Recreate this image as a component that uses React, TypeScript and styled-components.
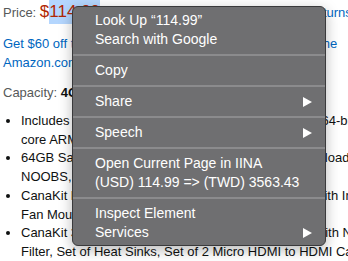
import React from "react";
import styled, { createGlobalStyle } from "styled-components";

const Global = createGlobalStyle`
  html, body {
    margin: 0;
    background: #fff;
    overflow: hidden;
  }
  body {
    font-family: "Liberation Sans", Arial, sans-serif;
  }
`;

const Page = styled.div`
  position: relative;
  width: 348px;
  height: 261px;
  overflow: hidden;
  padding-left: 3px;
  box-sizing: border-box;
  font-size: 13px;
  color: #0f1111;
`;

const Line = styled.div<{ $h?: number }>`
  white-space: nowrap;
  line-height: ${({ $h }) => $h ?? 19}px;
`;

const Label = styled.span`
  color: #565959;
`;

const Price = styled.span`
  color: #b12704;
  font-size: 17px;
`;

const Selected = styled.span`
  display: inline-block;
  line-height: 24px;
  background: #b4d6fe;
`;

const Link = styled.a`
  color: #0066c0;
  text-decoration: none;
`;

const Promo = styled.div`
  margin-top: 9px;
`;

const Capacity = styled.div`
  margin-top: 11px;
`;

const Strong = styled.b`
  color: #0f1111;
`;

const Bullets = styled.ul`
  margin: 10px 0 0;
  padding-left: 18px;
  list-style: disc;
  line-height: 18.7px;
`;

const Bullet = styled.li`
  white-space: nowrap;
`;

const Menu = styled.div`
  position: absolute;
  left: 72px;
  top: 6px;
  width: 254px;
  box-sizing: border-box;
  padding: 4px 0 3px;
  background: #6f6f71;
  border: 1px solid #3a3a3c;
  border-radius: 6px;
  box-shadow: 0 4px 14px rgba(0, 0, 0, 0.28);
  font-family: "Liberation Sans", Arial, sans-serif;
  font-size: 14px;
  color: #fff;
`;

const Item = styled.div`
  height: 19px;
  line-height: 19px;
  padding: 0 13px 0 22px;
  display: flex;
  align-items: center;
  justify-content: space-between;
  white-space: nowrap;
`;

const Separator = styled.div`
  height: 2px;
  margin: 5px 0;
  background: #8b8b8d;
`;

function Arrow() {
  return (
    <svg width="9" height="10" viewBox="0 0 9 10">
      <polygon points="0,0 9,5 0,10" fill="#fff" />
    </svg>
  );
}

export default function App() {
  return (
    <>
      <Global />
      <Page>
        <Line $h={24}>
          <Label>Price: </Label>
          <Price>
            $<Selected>114.99</Selected>
          </Price>{" "}
          <Label>+ No Import Fees Deposit &amp; </Label>
          <Link>FREE Returns</Link>
        </Line>
        <Promo>
          <Line>
            <Link>Get $60 off today: Pay $54.99 $114.99 on approval for the</Link>
          </Line>
          <Line>
            <Link>Amazon.com Rewards Visa Card.</Link>
          </Line>
        </Promo>
        <Capacity>
          <Line>
            <Label>Capacity: </Label>
            <Strong>4GB</Strong>
          </Line>
        </Capacity>
        <Bullets>
          <Bullet>
            Includes Raspberry Pi 4 4GB Model B with 1.5 GHz 64-bit quad-
            <br />
            core ARM Cortex-A72 processor
          </Bullet>
          <Bullet>
            64GB Samsung EVO+ MicroSD card (Class 10) Pre-loaded with
            <br />
            NOOBS, USB MicroSD Card Reader
          </Bullet>
          <Bullet>
            CanaKit Premium High-Gloss Raspberry Pi 4 case with Integrated
            <br />
            Fan Mount, Low Noise Bearing System Fan
          </Bullet>
          <Bullet>
            CanaKit 3.5A USB-C Raspberry Pi 4 Power supply with Noise
            <br />
            Filter, Set of Heat Sinks, Set of 2 Micro HDMI to HDMI Cables - 6 foot
          </Bullet>
        </Bullets>

        <Menu>
          <Item>Look Up “114.99”</Item>
          <Item>Search with Google</Item>
          <Separator />
          <Item>Copy</Item>
          <Separator />
          <Item>
            Share
            <Arrow />
          </Item>
          <Separator />
          <Item>
            Speech
            <Arrow />
          </Item>
          <Separator />
          <Item>Open Current Page in IINA</Item>
          <Item>(USD) 114.99 =&gt; (TWD) 3563.43</Item>
          <Separator />
          <Item>Inspect Element</Item>
          <Item>
            Services
            <Arrow />
          </Item>
        </Menu>
      </Page>
    </>
  );
}
